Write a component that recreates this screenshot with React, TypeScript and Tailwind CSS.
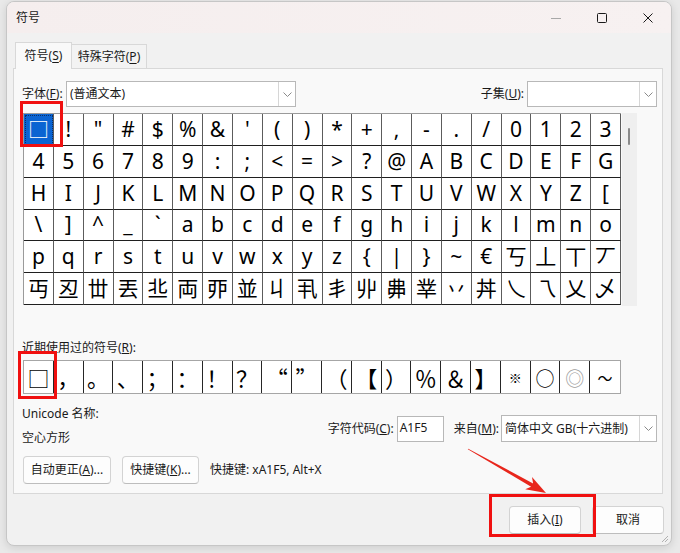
import React from 'react';

const ROWS: string[][] = [
  ['□', '!', '"', '#', '$', '%', '&', "'", '(', ')', '*', '+', ',', '-', '.', '/', '0', '1', '2', '3'],
  ['4', '5', '6', '7', '8', '9', ':', ';', '<', '=', '>', '?', '@', 'A', 'B', 'C', 'D', 'E', 'F', 'G'],
  ['H', 'I', 'J', 'K', 'L', 'M', 'N', 'O', 'P', 'Q', 'R', 'S', 'T', 'U', 'V', 'W', 'X', 'Y', 'Z', '['],
  ['\\', ']', '^', '_', '`', 'a', 'b', 'c', 'd', 'e', 'f', 'g', 'h', 'i', 'j', 'k', 'l', 'm', 'n', 'o'],
  ['p', 'q', 'r', 's', 't', 'u', 'v', 'w', 'x', 'y', 'z', '{', '|', '}', '~', '€', '丂', '丄', '丅', '丆'],
  ['丏', '丒', '丗', '丟', '丠', '両', '丣', '並', '丩', '丮', '丯', '丱', '丳', '丵', '丷', '丼', '乀', '乁', '乂', '乄'],
];

const RECENT = ['□', '，', '。', '、', '；', '：', '！', '？', '“', '”', '（', '【', '）', '％', '＆', '】', '※', '○', '◎', '～'];

// a few of the recent glyphs render smaller in the reference
const RECENT_SIZE: Record<string, string> = {
  '※': 'text-[13px]',
  '○': 'text-[19px]',
  '◎': 'text-[19px] text-[#a0a0a0]',
  '～': 'text-[15px]',
};

function Chevron() {
  return (
    <svg width="9" height="5" viewBox="0 0 9 5" fill="none" stroke="#8a8a8a" strokeWidth="1">
      <path d="M0.5 0.5 L4.5 4.5 L8.5 0.5" />
    </svg>
  );
}

function Dropdown({ value, className }: { value: string; className: string }) {
  return (
    <div className={`flex border border-[#b8b8b8] bg-white ${className}`}>
      <div className="flex flex-1 items-center pl-[3px] leading-none">{value}</div>
      <div className="flex w-[17px] items-center justify-center border-l border-[#d6d6d6]">
        <Chevron />
      </div>
    </div>
  );
}

function Btn({ children, className = '' }: { children: React.ReactNode; className?: string }) {
  return (
    <div
      className={`flex h-[28px] items-center justify-center rounded-[4px] border border-[#d3d3d3] border-b-[#bdbdbd] bg-[#fdfdfd] leading-none ${className}`}
    >
      {children}
    </div>
  );
}

export default function App() {
  return (
    <div className="relative h-[553px] w-[680px] overflow-hidden bg-[#e9e9e9] font-['Noto_Sans','Noto_Sans_CJK_SC',sans-serif] text-[12px] text-[#1a1a1a]">
      {/* Window */}
      <div className="relative ml-[6px] mt-[1px] flex h-[545px] w-[666px] flex-col overflow-hidden rounded-[8px] border border-[#c6c6c6] bg-[#f1f1f1] shadow-[0_2px_8px_rgba(0,0,0,0.12)]">
        {/* Title bar */}
        <div className="flex h-[31px] shrink-0 items-center bg-gradient-to-r from-[#f5eeee] to-[#f7f1f1]">
          <span className="flex-1 pl-[9px] leading-none">符号</span>
          <div className="flex h-full">
            <div className="flex w-[46px] items-center justify-center">
              <svg width="10" height="10" viewBox="0 0 10 10">
                <path d="M0 5.5 H10" stroke="#a8a8a8" strokeWidth="1" />
              </svg>
            </div>
            <div className="flex w-[46px] items-center justify-center">
              <svg width="10" height="10" viewBox="0 0 10 10" fill="none">
                <rect x="0.5" y="0.5" width="9" height="9" rx="1" stroke="#1a1a1a" strokeWidth="1" />
              </svg>
            </div>
            <div className="flex w-[46px] items-center justify-center">
              <svg width="10" height="10" viewBox="0 0 10 10">
                <path d="M0.5 0.5 L9.5 9.5 M9.5 0.5 L0.5 9.5" stroke="#1a1a1a" strokeWidth="1" />
              </svg>
            </div>
          </div>
        </div>

        {/* Tabs */}
        <div className="mt-[9px] flex h-[26px] shrink-0 items-end pl-[8px]">
          <div className="relative z-10 -mb-px flex h-[27px] w-[57px] items-center justify-center border border-b-0 border-[#d8d8d8] bg-[#f9f9f9] leading-none">
            符号(<u className="underline-offset-2">S</u>)
          </div>
          <div className="flex h-[24px] w-[75px] items-center justify-center border border-l-0 border-b-0 border-[#d8d8d8] bg-[#f3f3f3] leading-none">
            特殊字符(<u className="underline-offset-2">P</u>)
          </div>
        </div>

        {/* Tab panel */}
        <div className="ml-[6px] w-[650px] shrink-0 border border-[#d8d8d8] bg-[#f9f9f9] pb-[9px]">
          {/* Font / subset */}
          <div className="mt-[12px] flex h-[26px] items-center pl-[8px] pr-[5px]">
            <span className="w-[44px] leading-none">
              字体(<u>F</u>):
            </span>
            <Dropdown value="(普通文本)" className="h-[26px] w-[230px]" />
            <span className="ml-auto mr-[3px] leading-none">
              子集(<u>U</u>):
            </span>
            <Dropdown value="" className="h-[26px] w-[130px]" />
          </div>

          {/* Symbol grid */}
          <div className="mt-[6px] flex h-[193px] pl-[9px]">
            <div className="grid h-[192px] w-[598px] grid-cols-20 grid-rows-6 border-l border-t border-[#9a9a9a] bg-white text-[21px] leading-none text-black">
              {ROWS.flat().map((ch, i) => (
                <div
                  key={i}
                  className={`flex items-center justify-center border-b border-r border-b-[#1f1f1f] border-r-[#5c5c5c] ${
                    i === 0 ? 'bg-[#0a64d2] text-white outline-1 outline-dotted -outline-offset-2 outline-[#0b2f66]' : ''
                  }`}
                >
                  {ch}
                </div>
              ))}
            </div>
            <div className="ml-[1px] h-[193px] w-[15px] bg-[#efefef] pl-[6px] pt-[15px]">
              <div className="h-[17px] w-[2px] rounded-full bg-[#8a8a8a]" />
            </div>
          </div>

          {/* Recently used */}
          <div className="mt-[34px] h-[16px] pl-[8px] leading-[16px]">
            近期使用过的符号(<u>R</u>):
          </div>
          <div className="ml-[9px] mt-[4px] grid h-[34px] w-[598px] grid-cols-20 border border-[#a6a6a6] bg-white font-['Noto_Sans_CJK_SC',sans-serif] text-[22px] leading-none text-black">
            {RECENT.map((ch, i) => (
              <div
                key={i}
                className={`flex items-center justify-center ${i < 19 ? 'border-r border-[#262626]' : ''} ${
                  RECENT_SIZE[ch] ?? ''
                }`}
              >
                {ch}
              </div>
            ))}
          </div>

          {/* Info section */}
          <div className="mt-[12px] flex h-[40px] pr-[5px]">
            <div className="flex flex-col pl-[8px]">
              <span className="h-[16px] leading-[16px]">Unicode 名称:</span>
              <span className="mt-[8px] h-[16px] leading-[16px]">空心方形</span>
            </div>
            <div className="ml-auto mt-[9px] flex h-[27px] items-center">
              <span className="mr-[3px] leading-none">
                字符代码(<u>C</u>):
              </span>
              <div className="h-[26px] w-[47px] border border-[#b8b8b8] bg-white pl-[2px] pt-[3px] leading-[16px]">
                A1F5
              </div>
              <span className="ml-[10px] mr-[2px] leading-none">
                来自(<u>M</u>):
              </span>
              <Dropdown value="简体中文 GB(十六进制)" className="h-[27px] w-[156px]" />
            </div>
          </div>

          {/* Buttons */}
          <div className="mt-[10px] flex items-center pl-[9px]">
            <Btn className="w-[88px]">
              自动更正(<u>A</u>)...
            </Btn>
            <Btn className="ml-[11px] w-[77px]">
              快捷键(<u>K</u>)...
            </Btn>
            <span className="ml-[11px] leading-none">快捷键: xA1F5, Alt+X</span>
          </div>
        </div>

        {/* Dialog buttons */}
        <div className="mt-[12px] flex justify-end gap-[11px] pr-[7px]">
          <Btn className="w-[72px] border-[#3f86d6] border-b-[#2f74c4]">
            插入(<u>I</u>)
          </Btn>
          <Btn className="w-[72px]">取消</Btn>
        </div>

        {/* Resize grip */}
        <svg className="absolute bottom-[2px] right-[2px]" width="10" height="10" viewBox="0 0 10 10">
          <path d="M9 3 L3 9 M9 6 L6 9" stroke="#b0b0b0" strokeWidth="1" />
        </svg>
      </div>

      {/* Annotations */}
      <div className="absolute left-[20px] top-[101px] h-[46px] w-[43px] border-[3px] border-[#f01010]" />
      <div className="absolute left-[18px] top-[351px] h-[48px] w-[39px] border-[3px] border-[#f01010]" />
      <div className="absolute left-[489px] top-[494px] h-[43px] w-[107px] border-[3px] border-[#f01010]" />
      <svg className="absolute left-0 top-0" width="680" height="553" viewBox="0 0 680 553">
        <polygon
          points="467.8,449.3 531.1,486.8 525.2,489.3 546,493 532.0,477.1 533.1,483.4 468.2,448.7"
          fill="#e8261c"
        />
      </svg>
    </div>
  );
}
